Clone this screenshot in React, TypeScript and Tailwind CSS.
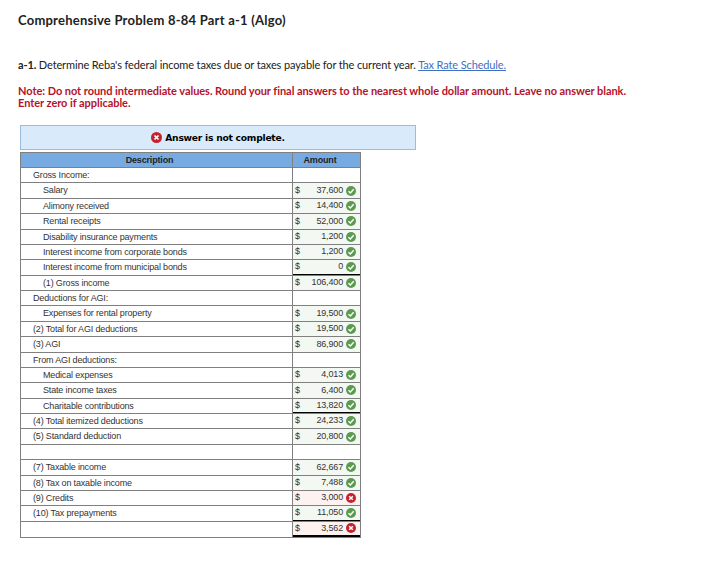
const rows = [
  { label: 'Gross Income:', indent: 1 },
  { label: 'Salary', indent: 2, value: '37,600', ok: true },
  { label: 'Alimony received', indent: 2, value: '14,400', ok: true },
  { label: 'Rental receipts', indent: 2, value: '52,000', ok: true },
  { label: 'Disability insurance payments', indent: 2, value: '1,200', ok: true },
  { label: 'Interest income from corporate bonds', indent: 2, value: '1,200', ok: true },
  { label: 'Interest income from municipal bonds', indent: 2, value: '0', ok: true, rule: true },
  { label: '(1) Gross income', indent: 2, value: '106,400', ok: true },
  { label: 'Deductions for AGI:', indent: 1 },
  { label: 'Expenses for rental property', indent: 2, value: '19,500', ok: true },
  { label: '(2) Total for AGI deductions', indent: 1, value: '19,500', ok: true },
  { label: '(3) AGI', indent: 1, value: '86,900', ok: true },
  { label: 'From AGI deductions:', indent: 1 },
  { label: 'Medical expenses', indent: 2, value: '4,013', ok: true },
  { label: 'State income taxes', indent: 2, value: '6,400', ok: true },
  { label: 'Charitable contributions', indent: 2, value: '13,820', ok: true, rule: true },
  { label: '(4) Total itemized deductions', indent: 1, value: '24,233', ok: true },
  { label: '(5) Standard deduction', indent: 1, value: '20,800', ok: true },
  { label: '', indent: 1 },
  { label: '(7) Taxable income', indent: 1, value: '62,667', ok: true },
  { label: '(8) Tax on taxable income', indent: 1, value: '7,488', ok: true },
  { label: '(9) Credits', indent: 1, value: '3,000', ok: false },
  { label: '(10) Tax prepayments', indent: 1, value: '11,050', ok: true, rule: true },
  { label: '', indent: 1, value: '3,562', ok: false, last: true },
]

function CheckMark() {
  return (
    <svg width="10" height="10" viewBox="0 0 12 12" className="shrink-0">
      <circle cx="6" cy="6" r="6" fill="#5c9a50" />
      <path d="M3 6.3 5.2 8.4 9.2 3.9" fill="none" stroke="#fff" strokeWidth="1.7" />
    </svg>
  )
}

function CrossMark({ size = 10 }: { size?: number }) {
  return (
    <svg width={size} height={size} viewBox="0 0 12 12" className="shrink-0">
      <circle cx="6" cy="6" r="6" fill="#c4222e" />
      <path d="M3.8 3.8 8.2 8.2M8.2 3.8 3.8 8.2" fill="none" stroke="#fff" strokeWidth="1.8" />
    </svg>
  )
}

export default function App() {
  return (
    <div className="w-[727px] h-[586px] bg-white overflow-hidden pt-[12px] font-['Lato',sans-serif] text-[#222]">
      <h1 className="pl-[18px] text-[13px] leading-[16px] font-bold tracking-[0.23px]">
        Comprehensive Problem 8-84 Part a-1 (Algo)
      </h1>

      <p className="pl-[18px] mt-[29px] text-[11px] leading-[16px] tracking-[-0.13px]">
        <b>a-1.</b> Determine Reba's federal income taxes due or taxes payable for the current year.{' '}
        <a className="text-[#3f6fc0] underline">Tax Rate Schedule.</a>
      </p>

      <p className="pl-[18px] mt-[12px] w-[650px] text-[11px] leading-[12px] font-bold text-[#b5122b] tracking-[-0.05px]">
        Note: Do not round intermediate values. Round your final answers to the nearest whole dollar amount. Leave no answer blank.
        <br />
        Enter zero if applicable.
      </p>

      <div className="ml-[20px] mt-[16px] w-[396px] h-[25px] flex items-center justify-center gap-[3px] bg-[#d9ebfa] border border-[#9bbcdd] text-[9.2px] font-bold text-black font-['DejaVu_Sans',sans-serif]">
        <CrossMark size={11} />
        <span className="tracking-[-0.25px]">Answer is not complete.</span>
      </div>

      <div className="ml-[20px] mt-[2px] w-[341px] border border-[#808080] font-['Liberation_Sans',sans-serif] text-[9px] tracking-[-0.16px] text-[#333]">
        <div className="flex h-[15px] bg-[#78aae2] border-b border-[#808080] font-bold text-[#222]">
          <div className="w-[272px] pr-[14px] border-r border-[#808080] text-center leading-[14px]">Description</div>
          <div className="flex-1 pr-[13px] text-center leading-[14px]">Amount</div>
        </div>
        {rows.map((row, i) => (
          <div key={i} className="flex h-[15.375px] border-b border-[#808080] last:border-b-0">
            <div
              className={
                'w-[272px] border-r border-[#808080] leading-[14px] ' +
                (row.indent === 2 ? 'pl-[22px]' : 'pl-[12px]')
              }
            >
              {row.label}
            </div>
            {row.value ? (
              <div
                className={
                  'flex-1 flex items-center pl-[2px] pr-[4px] ' +
                  (row.ok ? 'bg-[#f4f8f3] ' : 'bg-[#fdf2f0] ') +
                  (row.rule ? 'border-b border-black ' : '') +
                  (row.last ? 'border-b-[2px] border-black' : '')
                }
              >
                <span>$</span>
                <span className="flex-1 text-right pr-[3px]">{row.value}</span>
                {row.ok ? <CheckMark /> : <CrossMark />}
              </div>
            ) : (
              <div className="flex-1" />
            )}
          </div>
        ))}
      </div>
    </div>
  )
}
